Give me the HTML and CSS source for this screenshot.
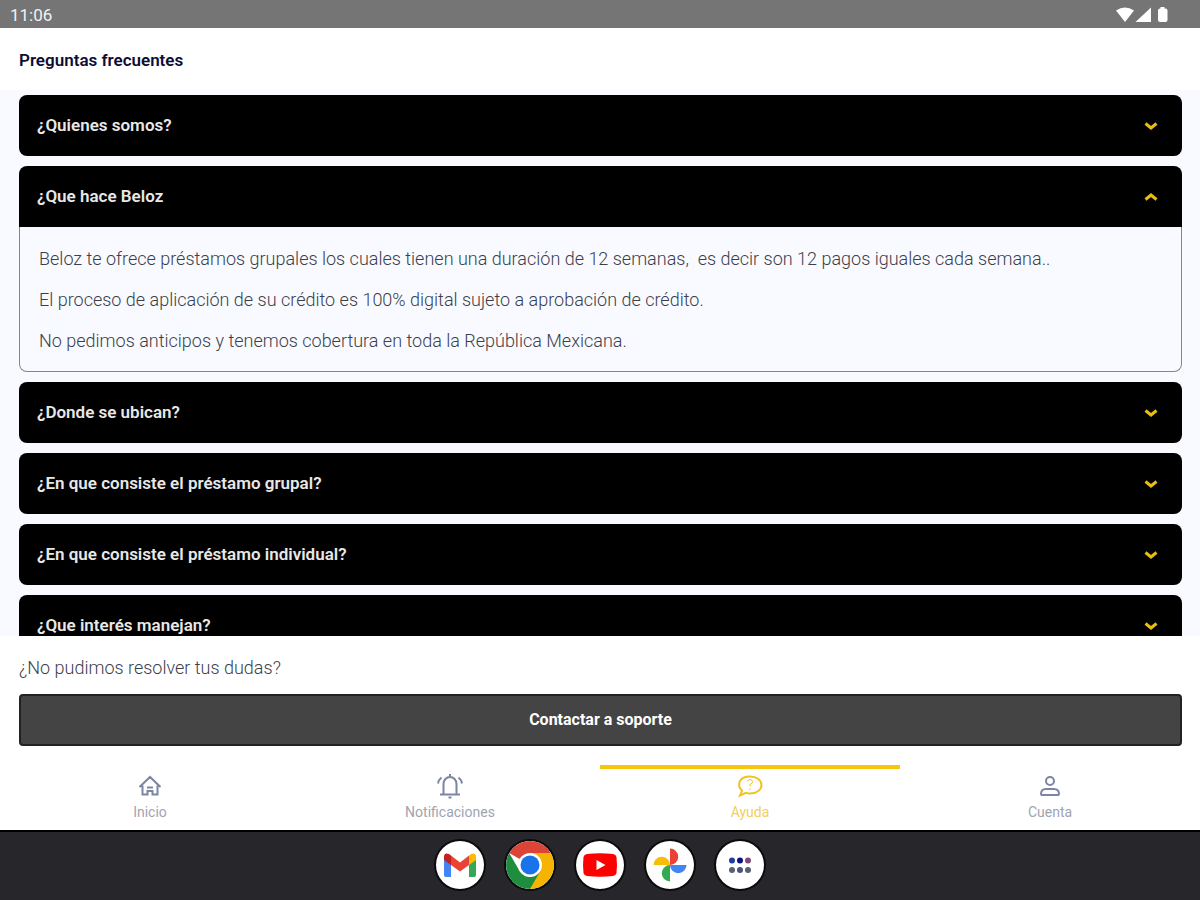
FILE: index.html
```html
<!DOCTYPE html>
<html lang="es">
<head>
<meta charset="utf-8">
<meta name="viewport" content="width=device-width, initial-scale=1">
<title>Preguntas frecuentes</title>
<link rel="stylesheet" href="styles.css">
</head>
<body>
<div class="status">
  <span>11:06</span>
  <svg class="status-icons" width="54" height="18" viewBox="0 0 54 18" aria-hidden="true">
    <path d="M0 4.500Q9 -1.500 18 4.500L9 16z"/><path d="M19.500 16L35 1.500V16z"/><path d="M44.500 1h4v1.500h1q2 0 2 2V14q0 2-2 2H44q-2 0-2-2V4.500q0-2 2-2h.5z"/>
  </svg>
</div>
<header class="header"><h1>Preguntas frecuentes</h1></header>
<main class="faq">
  <section class="item"><h2><button class="question" type="button" aria-expanded="false">¿Quienes somos?<svg class="chevron" viewBox="0 0 14 8"><path d="M1.500 1.500L7 6l5.500-4.500"/></svg></button></h2></section>
  <section class="item open"><h2><button class="question" type="button" aria-expanded="true">¿Que hace Beloz<svg class="chevron" viewBox="0 0 14 8"><path d="M1.500 1.500L7 6l5.500-4.500"/></svg></button></h2>
    <div class="answer">
      <p>Beloz te ofrece préstamos grupales los cuales tienen una duración de 12 semanas,&nbsp; es decir son 12 pagos iguales cada semana..</p>
      <p>El proceso de aplicación de su crédito es 100% digital sujeto a aprobación de crédito.</p>
      <p>No pedimos anticipos y tenemos cobertura en toda la República Mexicana.</p>
    </div>
  </section>
  <section class="item"><h2><button class="question" type="button" aria-expanded="false">¿Donde se ubican?<svg class="chevron" viewBox="0 0 14 8"><path d="M1.500 1.500L7 6l5.500-4.500"/></svg></button></h2></section>
  <section class="item"><h2><button class="question" type="button" aria-expanded="false">¿En que consiste el préstamo grupal?<svg class="chevron" viewBox="0 0 14 8"><path d="M1.500 1.500L7 6l5.500-4.500"/></svg></button></h2></section>
  <section class="item"><h2><button class="question" type="button" aria-expanded="false">¿En que consiste el préstamo individual?<svg class="chevron" viewBox="0 0 14 8"><path d="M1.500 1.500L7 6l5.500-4.500"/></svg></button></h2></section>
  <section class="item"><h2><button class="question" type="button" aria-expanded="false">¿Que interés manejan?<svg class="chevron" viewBox="0 0 14 8"><path d="M1.500 1.500L7 6l5.500-4.500"/></svg></button></h2></section>
</main>
<section class="support">
  <p>¿No pudimos resolver tus dudas?</p>
  <button class="contact" type="button">Contactar a soporte</button>
</section>
<nav class="tabs">
  <a class="tab" href="#inicio">
    <svg viewBox="0 0 28 28"><path d="M3.500 15L14 5l10.500 10M6.500 13.500V22.500h5v-3.500h5v3.500h5V13.500M11 15.500h6"/></svg>
    <span>Inicio</span></a>
  <a class="tab" href="#notificaciones">
    <svg viewBox="0 0 28 28"><path d="M14 2v3M7.500 22V12a6.500 7 0 0 1 13 0v10M4 22.500h20M12.500 25.500h3M5.500 5.500C3.500 7 2.500 9 2 11.500M22.500 5.500c2 1.500 3 3.500 3.500 6"/></svg>
    <span>Notificaciones</span></a>
  <a class="tab active" href="#ayuda" aria-current="page">
    <svg viewBox="0 0 28 28"><path d="M6 18.500C1 14 2 4.500 14 4.500c7 0 11.500 4 11.500 8.500S21 21.500 14 21.500q-2.500 0-4-.7L4 23.500z"/><path d="M11.500 9.500q.3-2 2.500-2t2.500 2-2.500 3v2M14 16.500v1.500" stroke-width="1"/></svg>
    <span>Ayuda</span></a>
  <a class="tab" href="#cuenta">
    <svg viewBox="0 0 28 28"><circle cx="14" cy="9" r="4"/><path d="M5 22q0-5 5-5h8q5 0 5 5 0 1-1 1H6q-1 0-1-1z"/></svg>
    <span>Cuenta</span></a>
</nav>
<footer class="dock">
  <button class="app" type="button" aria-label="Gmail"><svg viewBox="0 0 48 48">
    <path fill="#4285f4" d="M8 17l7 5v14h-5q-2 0-2-2z"/><path fill="#34a853" d="M33 22l7-5v17q0 2-2 2h-5z"/><path fill="#fbbc04" d="M33 14.500l2-1.500q5-2 5 3v3l-7 5z"/><path fill="#c5221f" d="M8 19v-3q0-5 5-3l2 1.500V24z"/><path fill="#ea4335" d="M15 14.500l9 7 9-7V24l-9 6.500-9-6.500z"/></svg></button>
  <button class="app" type="button" aria-label="Chrome"><svg viewBox="0 0 48 48">
    <path fill="#db4437" d="M24 24L3.220 12A24 24 0 0 1 44.780 12z"/><path fill="#f4b400" d="M24 24L44.780 12A24 24 0 0 1 24 48z"/><path fill="#f4b400" d="M44.780 12H24l10.400 18L24 48z"/><path fill="#1e8e3e" d="M3.220 12l10.400 18L24 36l10.400-6L24 48A24 24 0 0 1 3.220 12z"/><circle cx="24" cy="24" r="12" fill="#fff"/><circle cx="24" cy="24" r="9.500" fill="#1a73e8"/></svg></button>
  <button class="app" type="button" aria-label="YouTube"><svg viewBox="0 0 48 48"><path fill="#f00" d="M11 13q13-1.500 26 0 3 .5 3.500 3 1 8 0 16-.5 2.500-3.500 3-13 1.500-26 0-3-.5-3.500-3-1-8 0-16 .5-2.500 3.500-3z"/><path fill="#fff" d="M20.500 19l9 5-9 5z"/></svg></button>
  <button class="app" type="button" aria-label="Fotos"><svg viewBox="0 0 48 48"><path fill="#ea4335" d="M24 7.500a8.200 8.200 0 0 1 0 16.500z"/><path fill="#4285f4" d="M24 24h16.500a8.200 8.200 0 0 1-16.500 0z"/><path fill="#34a853" d="M24 24v16.500a8.200 8.200 0 0 1 0-16.500z"/><path fill="#fbbc04" d="M7.500 24a8.200 8.200 0 0 1 16.500 0z"/></svg></button>
  <button class="app" type="button" aria-label="Aplicaciones"><svg viewBox="0 0 48 48"><g fill="#1f3f9a"><circle cx="16" cy="19.500" r="3"/><circle cx="24" cy="19.500" r="3" fill="#10107e"/><circle cx="32" cy="19.500" r="3" fill="#7c4c78"/></g><g fill="#5b6070"><circle cx="16" cy="29" r="3"/><circle cx="24" cy="29" r="3" fill="#46557e"/><circle cx="32" cy="29" r="3"/></g></svg></button>
</footer>
</body>
</html>
```
FILE: styles.css
```css
* { box-sizing: border-box; }
body {
  margin: 0;
  height: 100vh;
  display: flex;
  flex-direction: column;
  overflow: hidden;
  background: #fff;
  color: #3c3e4a;
  font-family: Roboto, "Liberation Sans", sans-serif;
  font-size: 18px;
  font-weight: 300;
  line-height: 21px;
}
h1, h2, p { margin: 0; }
button { font: inherit; cursor: pointer; }
svg { display: block; fill: none; }
.status {
  display: flex;
  justify-content: space-between;
  align-items: center;
  flex: none;
  height: 28px;
  padding: 2px 30px 0 10px;
  background: #757575;
  color: #f2f2f2;
  font-size: 17px;
  font-weight: 400;
}
.status-icons { fill: #fff; }
.header { flex: none; padding: 22px 19px 19px; }
.header h1 { color: #0d0d35; font-size: 17px; line-height: 21px; font-weight: 600; }
.faq {
  flex: 1;
  min-height: 0;
  overflow: hidden;
  display: flex;
  flex-direction: column;
  gap: 10px;
  padding: 5px 18px 0 19px;
  background: #f8faff;
}
.item { flex: none; border-radius: 8px; }
.question {
  display: flex;
  width: 100%;
  align-items: center;
  justify-content: space-between;
  padding: 20px 24px 20px 18px;
  border: 0;
  border-radius: 8px;
  background: #000;
  color: #e8e8e8;
  font-size: 17px;
  font-weight: 600;
  line-height: 21px;
  text-align: left;
}
.open .question { border-radius: 8px 8px 0 0; }
.open .chevron { transform: rotate(180deg); }
.chevron { width: 14px; height: 8px; stroke: #e9bd14; stroke-width: 3px; }
.answer {
  display: flex;
  flex-direction: column;
  gap: 20px;
  padding: 21px 19px 20px;
  border: 1px solid #858585;
  border-top: 0;
  border-radius: 0 0 8px 8px;
}
.support { flex: none; padding: 21px 18px 19px 19px; }
.contact {
  display: block;
  width: 100%;
  margin-top: 16px;
  padding: 14px;
  border: 2px solid #222;
  border-radius: 4px;
  background: #444;
  color: #fff;
  font-size: 16px;
  line-height: 20px;
  font-weight: 700;
}
.tabs { display: flex; flex: none; }
.tab {
  flex: 1;
  display: flex;
  flex-direction: column;
  align-items: center;
  padding: 3px 0 9px;
  border-top: 4px solid transparent;
  color: #a0a4b0;
  font-size: 14px;
  font-weight: 400;
  line-height: 18px;
  text-decoration: none;
}
.tab svg { width: 28px; height: 28px; margin-bottom: 3px; stroke: #7c86a3; stroke-width: 2px; }
.tab.active { border-color: #f5c50f; color: #f3cf58; }
.tab.active svg { stroke: #f0c322; }
.dock {
  display: flex;
  flex: none;
  justify-content: center;
  gap: 22px;
  padding: 9px 0 11px;
  border-top: 2px solid #000;
  background: #26262b;
}
.app {
  width: 48px;
  height: 48px;
  padding: 0;
  border: 0;
  border-radius: 50%;
  background: #fff;
  overflow: hidden;
  box-shadow: 0 0 0 2px #0b0b0d;
}
.app svg { width: 48px; height: 48px; }
```
